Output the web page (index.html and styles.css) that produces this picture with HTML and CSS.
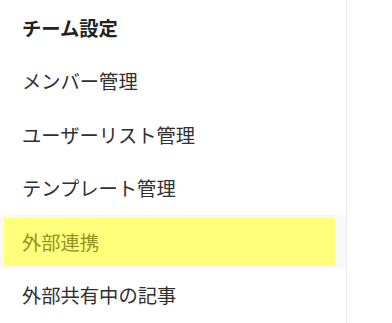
FILE: index.html
```html
<!DOCTYPE html>
<html lang="ja">
<head>
<meta charset="utf-8">
<link rel="stylesheet" href="styles.css">
</head>
<body>
<nav class="sidebar">
  <div class="item heading">チーム設定</div>
  <div class="item">メンバー管理</div>
  <div class="item">ユーザーリスト管理</div>
  <div class="item">テンプレート管理</div>
  <div class="item active"><span class="mark">外部連携</span></div>
  <div class="item">外部共有中の記事</div>
</nav>
</body>
</html>
```
FILE: styles.css
```css
html, body {
  margin: 0;
  padding: 0;
  background: #fff;
}
body {
  font-family: "Noto Sans CJK JP", "Noto Sans", sans-serif;
  width: 392px;
  height: 323px;
  overflow: hidden;
}
.sidebar {
  width: 347px;
  height: 323px;
  border-right: 1px solid #ececec;
  padding-top: 1px;
  box-sizing: border-box;
}
.item {
  height: 53.5px;
  display: flex;
  align-items: center;
  padding-left: 22px;
  font-size: 19.3px;
  color: #303030;
  box-sizing: border-box;
}
.heading {
  font-weight: 700;
  color: #222;
}
.item.active {
  padding: 3px 11px 3px 4px;
  background: #f8f8f8;
  border-radius: 6px;
  align-items: stretch;
}
.mark {
  flex: 1;
  display: flex;
  align-items: center;
  padding-left: 18px;
  background: #ffff7c;
  color: #92921f;
}
```
